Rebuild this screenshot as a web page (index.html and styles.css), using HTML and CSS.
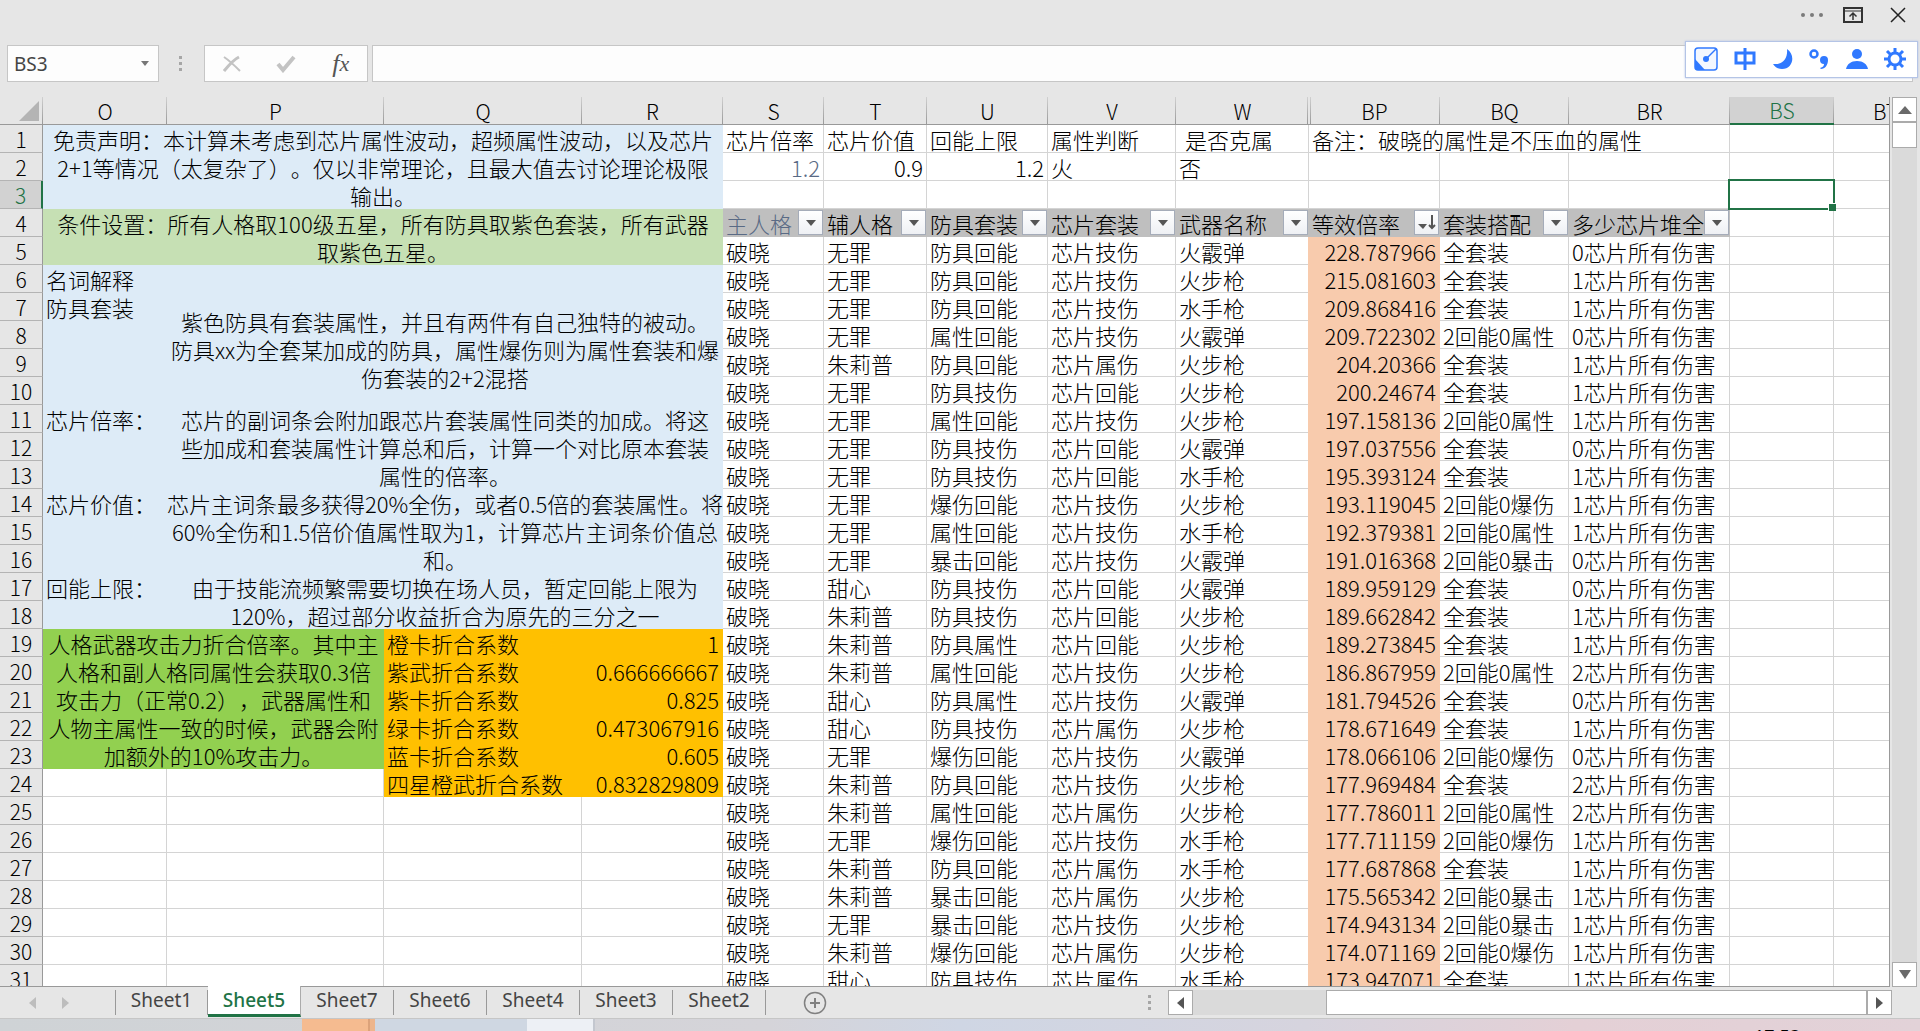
FILE: index.html
```html
<!DOCTYPE html>
<html lang="zh-CN">
<head>
    <meta charset="UTF-8">
    <meta name="viewport" content="width=device-width, initial-scale=1.0">
    <title>Sheet5</title>
    <link rel="stylesheet" href="styles.css">
</head>
<body>
    <header class="titlebar">
        <button class="icon-btn" aria-label="更多"><svg width="24" height="20" viewBox="0 0 24 20"><g fill="#7b7b7b"><circle cx="3" cy="10" r="2"/><circle cx="12" cy="10" r="2"/><circle cx="21" cy="10" r="2"/></g></svg></button>
        <button class="icon-btn" aria-label="功能区显示选项"><svg width="20" height="16" viewBox="0 0 20 16" fill="none" stroke="#333" stroke-width="2"><path d="M1 1h18v14H1z"/><path d="M1 4h18" stroke-width="1"/><path d="M10 13V6M6.500 9.500 10 6l3.500 3.500" stroke-width="1.500"/></svg></button>
        <button class="icon-btn" aria-label="关闭"><svg width="16" height="16" viewBox="0 0 16 16" fill="none" stroke="#222" stroke-width="1.500"><path d="M1 1l14 14M15 1 1 15"/></svg></button>
    </header>

    <div class="formula-row">
        <div class="name-box">
            <input type="text" value="BS3" aria-label="名称框">
            <button aria-label="名称列表"><svg width="8" height="5"><path d="M0 0h8L4 5z" fill="#777"/></svg></button>
        </div>
        <svg class="grip" width="3" height="15" fill="#a6a6a6"><path d="M0 0h3v3H0zM0 6h3v3H0zM0 12h3v3H0z"/></svg>
        <div class="formula-tools">
            <button aria-label="取消"><svg width="18" height="18" viewBox="0 0 18 18" fill="none" stroke="#c3c3c3"><path d="M1 2c6 4 10 8 16 14" stroke-width="2"/><path d="M16 2C10 5 6 10 1 16" stroke-width="3"/></svg></button>
            <button aria-label="输入"><svg width="20" height="18" viewBox="0 0 20 18" fill="none" stroke="#c3c3c3" stroke-width="4"><path d="M2 9l5 6L18 2"/></svg></button>
            <button class="fx" aria-label="插入函数">f<small>x</small></button>
        </div>
        <input class="formula-input" type="text" aria-label="编辑栏">
    </div>

    <div class="ime-bar">
        <button aria-label="输入法"><svg width="24" height="24" viewBox="0 0 24 24"><rect x="1" y="1" width="22" height="22" rx="3" fill="#f3f7ff" stroke="#3079ff" stroke-width="1.500"/><path d="M1 12l10 11H3l-2-2z" fill="#3079ff"/><circle cx="12" cy="12" r="3" fill="#3079ff"/><path d="M12 12 22 2" stroke="#3079ff" stroke-width="1.500"/></svg></button>
        <button aria-label="中文"><svg width="22" height="22" viewBox="0 0 22 22" fill="none" stroke="#3079ff" stroke-width="3"><path d="M2 5h18v10H2zM11 0v22"/></svg></button>
        <button aria-label="夜间"><svg width="20" height="20" viewBox="0 0 20 20" fill="#3079ff"><path d="M14 0c9 6 6 20-5 20-4 0-7-2-9-5 10 1 15-6 14-15z"/></svg></button>
        <button aria-label="标点"><svg width="20" height="20" viewBox="0 0 20 20"><circle cx="5" cy="5" r="3.500" fill="none" stroke="#3079ff" stroke-width="2.500"/><path d="M11 19c3-1 4-2 4-4a4 4 0 1 1 4-4c0 5-3 9-7 9z" fill="#3079ff"/></svg></button>
        <button aria-label="账户"><svg width="22" height="20" viewBox="0 0 22 20" fill="#3079ff"><circle cx="11" cy="5" r="5"/><path d="M0 20c1-5 5-8 11-8s10 3 11 8z"/></svg></button>
        <button aria-label="设置"><svg width="22" height="22" viewBox="0 0 22 22" fill="none" stroke="#3079ff" stroke-width="3"><circle cx="11" cy="11" r="6"/><path d="M11 0v5M11 17v5M0 11h5M17 11h5M3 3l4 4M15 15l4 4M19 3l-4 4M7 15l-4 4"/></svg></button>
    </div>

    <main class="workspace">
        <div class="grid-pane">
            <table class="sheet">
                <colgroup>
                    <col class="c-head"><col class="c-o"><col class="c-p"><col class="c-q"><col class="c-r"><col class="c-s"><col class="c-t"><col class="c-u"><col class="c-v"><col class="c-w"><col class="c-bp"><col class="c-bq"><col class="c-br"><col class="c-bs"><col>
                </colgroup>
                <thead>
                    <tr><th class="corner"><svg width="20" height="20"><path d="M20 0v20H0z" fill="#b4b4b4"/></svg></th><th>O</th><th>P</th><th>Q</th><th>R</th><th>S</th><th>T</th><th>U</th><th>V</th><th class="before-hidden">W</th><th class="after-hidden">BP</th><th>BQ</th><th>BR</th><th class="active">BS</th><th>BT</th></tr>
                </thead>
                <tbody>
                    <tr><th>1</th><td class="blue note" colspan="4" rowspan="3">免责声明：本计算未考虑到芯片属性波动，超频属性波动，以及芯片<br>2+1等情况（太复杂了）。仅以非常理论，且最大值去讨论理论极限<br>输出。</td><td>芯片倍率</td><td>芯片价值</td><td>回能上限</td><td>属性判断</td><td class="indent">是否克属</td><td colspan="3">备注：破晓的属性是不压血的属性</td><td></td><td></td></tr>
                    <tr><th>2</th><td class="num muted">1.2</td><td class="num">0.9</td><td class="num">1.2</td><td>火</td><td>否</td><td></td><td></td><td></td><td></td><td></td></tr>
                    <tr><th class="active">3</th><td></td><td></td><td></td><td></td><td></td><td></td><td></td><td></td><td class="selected"></td><td></td></tr>
                    <tr class="filters"><th>4</th><td class="lime note" colspan="4" rowspan="2">条件设置：所有人格取100级五星，所有防具取紫色套装，所有武器<br>取紫色五星。</td>
                        <td class="filter muted"><div><span>主人格</span><button aria-label="筛选主人格"><svg width="10" height="6"><path d="M0 0h10L5 6z" fill="#555"/></svg></button></div></td>
                        <td class="filter"><div><span>辅人格</span><button aria-label="筛选辅人格"><svg width="10" height="6"><path d="M0 0h10L5 6z" fill="#555"/></svg></button></div></td>
                        <td class="filter"><div><span>防具套装</span><button aria-label="筛选防具套装"><svg width="10" height="6"><path d="M0 0h10L5 6z" fill="#555"/></svg></button></div></td>
                        <td class="filter"><div><span>芯片套装</span><button aria-label="筛选芯片套装"><svg width="10" height="6"><path d="M0 0h10L5 6z" fill="#555"/></svg></button></div></td>
                        <td class="filter"><div><span>武器名称</span><button aria-label="筛选武器名称"><svg width="10" height="6"><path d="M0 0h10L5 6z" fill="#555"/></svg></button></div></td>
                        <td class="filter"><div><span>等效倍率</span><button aria-label="排序等效倍率"><svg width="18" height="16"><path d="M0 9h9l-4 5z" fill="#555"/><path d="M14 0v12M11 10l3 3 3-3" fill="none" stroke="#555" stroke-width="2"/></svg></button></div></td>
                        <td class="filter"><div><span>套装搭配</span><button aria-label="筛选套装搭配"><svg width="10" height="6"><path d="M0 0h10L5 6z" fill="#555"/></svg></button></div></td>
                        <td class="filter"><div><span>多少芯片堆全</span><button aria-label="筛选多少芯片堆全"><svg width="10" height="6"><path d="M0 0h10L5 6z" fill="#555"/></svg></button></div></td>
                        <td></td><td></td></tr>
                    <tr><th>5</th><td>破晓</td><td>无罪</td><td>防具回能</td><td>芯片技伤</td><td>火霰弹</td><td class="num rate">228.787966</td><td>全套装</td><td>0芯片所有伤害</td><td></td><td></td></tr>
                    <tr><th>6</th><td class="blue">名词解释</td><td class="blue" colspan="3"></td><td>破晓</td><td>无罪</td><td>防具回能</td><td>芯片技伤</td><td>火步枪</td><td class="num rate">215.081603</td><td>全套装</td><td>1芯片所有伤害</td><td></td><td></td></tr>
                    <tr><th>7</th><td class="blue">防具套装</td><td class="blue note" colspan="3" rowspan="4">紫色防具有套装属性，并且有两件有自己独特的被动。<br>防具xx为全套某加成的防具，属性爆伤则为属性套装和爆<br>伤套装的2+2混搭</td><td>破晓</td><td>无罪</td><td>防具回能</td><td>芯片技伤</td><td>水手枪</td><td class="num rate">209.868416</td><td>全套装</td><td>1芯片所有伤害</td><td></td><td></td></tr>
                    <tr><th>8</th><td class="blue" rowspan="3"></td><td>破晓</td><td>无罪</td><td>属性回能</td><td>芯片技伤</td><td>火霰弹</td><td class="num rate">209.722302</td><td>2回能0属性</td><td>0芯片所有伤害</td><td></td><td></td></tr>
                    <tr><th>9</th><td>破晓</td><td>朱莉普</td><td>防具回能</td><td>芯片属伤</td><td>火步枪</td><td class="num rate">204.20366</td><td>全套装</td><td>1芯片所有伤害</td><td></td><td></td></tr>
                    <tr><th>10</th><td>破晓</td><td>无罪</td><td>防具技伤</td><td>芯片回能</td><td>火步枪</td><td class="num rate">200.24674</td><td>全套装</td><td>1芯片所有伤害</td><td></td><td></td></tr>
                    <tr><th>11</th><td class="blue">芯片倍率：</td><td class="blue note" colspan="3" rowspan="3">芯片的副词条会附加跟芯片套装属性同类的加成。将这<br>些加成和套装属性计算总和后，计算一个对比原本套装<br>属性的倍率。</td><td>破晓</td><td>无罪</td><td>属性回能</td><td>芯片技伤</td><td>火步枪</td><td class="num rate">197.158136</td><td>2回能0属性</td><td>1芯片所有伤害</td><td></td><td></td></tr>
                    <tr><th>12</th><td class="blue" rowspan="2"></td><td>破晓</td><td>无罪</td><td>防具技伤</td><td>芯片回能</td><td>火霰弹</td><td class="num rate">197.037556</td><td>全套装</td><td>0芯片所有伤害</td><td></td><td></td></tr>
                    <tr><th>13</th><td>破晓</td><td>无罪</td><td>防具技伤</td><td>芯片回能</td><td>水手枪</td><td class="num rate">195.393124</td><td>全套装</td><td>1芯片所有伤害</td><td></td><td></td></tr>
                    <tr><th>14</th><td class="blue">芯片价值：</td><td class="blue note" colspan="3" rowspan="3">芯片主词条最多获得20%全伤，或者0.5倍的套装属性。将<br>60%全伤和1.5倍价值属性取为1，计算芯片主词条价值总<br>和。</td><td>破晓</td><td>无罪</td><td>爆伤回能</td><td>芯片技伤</td><td>火步枪</td><td class="num rate">193.119045</td><td>2回能0爆伤</td><td>1芯片所有伤害</td><td></td><td></td></tr>
                    <tr><th>15</th><td class="blue" rowspan="2"></td><td>破晓</td><td>无罪</td><td>属性回能</td><td>芯片技伤</td><td>水手枪</td><td class="num rate">192.379381</td><td>2回能0属性</td><td>1芯片所有伤害</td><td></td><td></td></tr>
                    <tr><th>16</th><td>破晓</td><td>无罪</td><td>暴击回能</td><td>芯片技伤</td><td>火霰弹</td><td class="num rate">191.016368</td><td>2回能0暴击</td><td>0芯片所有伤害</td><td></td><td></td></tr>
                    <tr><th>17</th><td class="blue">回能上限：</td><td class="blue note" colspan="3" rowspan="2">由于技能流频繁需要切换在场人员，暂定回能上限为<br>120%，超过部分收益折合为原先的三分之一</td><td>破晓</td><td>甜心</td><td>防具技伤</td><td>芯片回能</td><td>火霰弹</td><td class="num rate">189.959129</td><td>全套装</td><td>0芯片所有伤害</td><td></td><td></td></tr>
                    <tr><th>18</th><td class="blue"></td><td>破晓</td><td>朱莉普</td><td>防具技伤</td><td>芯片回能</td><td>火步枪</td><td class="num rate">189.662842</td><td>全套装</td><td>1芯片所有伤害</td><td></td><td></td></tr>
                    <tr><th>19</th><td class="green note" colspan="2" rowspan="5">人格武器攻击力折合倍率。其中主<br>人格和副人格同属性会获取0.3倍<br>攻击力（正常0.2），武器属性和<br>人物主属性一致的时候，武器会附<br>加额外的10%攻击力。</td><td class="orange">橙卡折合系数</td><td class="orange num">1</td><td>破晓</td><td>朱莉普</td><td>防具属性</td><td>芯片回能</td><td>火步枪</td><td class="num rate">189.273845</td><td>全套装</td><td>1芯片所有伤害</td><td></td><td></td></tr>
                    <tr><th>20</th><td class="orange">紫武折合系数</td><td class="orange num">0.666666667</td><td>破晓</td><td>朱莉普</td><td>属性回能</td><td>芯片技伤</td><td>火步枪</td><td class="num rate">186.867959</td><td>2回能0属性</td><td>2芯片所有伤害</td><td></td><td></td></tr>
                    <tr><th>21</th><td class="orange">紫卡折合系数</td><td class="orange num">0.825</td><td>破晓</td><td>甜心</td><td>防具属性</td><td>芯片技伤</td><td>火霰弹</td><td class="num rate">181.794526</td><td>全套装</td><td>0芯片所有伤害</td><td></td><td></td></tr>
                    <tr><th>22</th><td class="orange">绿卡折合系数</td><td class="orange num">0.473067916</td><td>破晓</td><td>甜心</td><td>防具技伤</td><td>芯片属伤</td><td>火步枪</td><td class="num rate">178.671649</td><td>全套装</td><td>1芯片所有伤害</td><td></td><td></td></tr>
                    <tr><th>23</th><td class="orange">蓝卡折合系数</td><td class="orange num">0.605</td><td>破晓</td><td>无罪</td><td>爆伤回能</td><td>芯片技伤</td><td>火霰弹</td><td class="num rate">178.066106</td><td>2回能0爆伤</td><td>0芯片所有伤害</td><td></td><td></td></tr>
                    <tr><th>24</th><td></td><td></td><td class="orange">四星橙武折合系数</td><td class="orange num">0.832829809</td><td>破晓</td><td>朱莉普</td><td>防具回能</td><td>芯片技伤</td><td>火步枪</td><td class="num rate">177.969484</td><td>全套装</td><td>2芯片所有伤害</td><td></td><td></td></tr>
                    <tr><th>25</th><td></td><td></td><td></td><td></td><td>破晓</td><td>朱莉普</td><td>属性回能</td><td>芯片属伤</td><td>火步枪</td><td class="num rate">177.786011</td><td>2回能0属性</td><td>2芯片所有伤害</td><td></td><td></td></tr>
                    <tr><th>26</th><td></td><td></td><td></td><td></td><td>破晓</td><td>无罪</td><td>爆伤回能</td><td>芯片技伤</td><td>水手枪</td><td class="num rate">177.711159</td><td>2回能0爆伤</td><td>1芯片所有伤害</td><td></td><td></td></tr>
                    <tr><th>27</th><td></td><td></td><td></td><td></td><td>破晓</td><td>朱莉普</td><td>防具回能</td><td>芯片属伤</td><td>水手枪</td><td class="num rate">177.687868</td><td>全套装</td><td>1芯片所有伤害</td><td></td><td></td></tr>
                    <tr><th>28</th><td></td><td></td><td></td><td></td><td>破晓</td><td>朱莉普</td><td>暴击回能</td><td>芯片属伤</td><td>火步枪</td><td class="num rate">175.565342</td><td>2回能0暴击</td><td>1芯片所有伤害</td><td></td><td></td></tr>
                    <tr><th>29</th><td></td><td></td><td></td><td></td><td>破晓</td><td>无罪</td><td>暴击回能</td><td>芯片技伤</td><td>火步枪</td><td class="num rate">174.943134</td><td>2回能0暴击</td><td>1芯片所有伤害</td><td></td><td></td></tr>
                    <tr><th>30</th><td></td><td></td><td></td><td></td><td>破晓</td><td>朱莉普</td><td>爆伤回能</td><td>芯片属伤</td><td>火步枪</td><td class="num rate">174.071169</td><td>2回能0爆伤</td><td>1芯片所有伤害</td><td></td><td></td></tr>
                    <tr><th>31</th><td></td><td></td><td></td><td></td><td>破晓</td><td>甜心</td><td>防具技伤</td><td>芯片属伤</td><td>水手枪</td><td class="num rate">173.947071</td><td>全套装</td><td>1芯片所有伤害</td><td></td><td></td></tr>
                </tbody>
            </table>
        </div>
        <div class="vscroll">
            <button aria-label="向上滚动"><svg width="14" height="8"><path d="M0 8l7-8 7 8z" fill="#6a6a6a"/></svg></button>
            <div class="vthumb"></div>
            <button class="down" aria-label="向下滚动"><svg width="12" height="9"><path d="M0 0h12L6 9z" fill="#6a6a6a"/></svg></button>
        </div>
    </main>

    <footer class="sheetbar">
        <div class="tab-nav">
            <button aria-label="上一个工作表"><svg width="7" height="12"><path d="M7 0v12L0 6z" fill="#bdbdbd"/></svg></button>
            <button aria-label="下一个工作表"><svg width="7" height="12"><path d="M0 0v12l7-6z" fill="#bdbdbd"/></svg></button>
        </div>
        <nav class="tabs">
            <a href="#sheet1">Sheet1</a>
            <a href="#sheet5" class="current">Sheet5</a>
            <a href="#sheet7">Sheet7</a>
            <a href="#sheet6">Sheet6</a>
            <a href="#sheet4">Sheet4</a>
            <a href="#sheet3">Sheet3</a>
            <a href="#sheet2">Sheet2</a>
        </nav>
        <button class="add-sheet" aria-label="新工作表"><svg width="24" height="24" viewBox="0 0 24 24" fill="none" stroke="#808080"><circle cx="12" cy="12" r="10.500" stroke-width="1.500"/><path d="M12 7v10M7 12h10" stroke-width="2"/></svg></button>
        <svg class="grip bar-grip" width="3" height="15" fill="#a6a6a6"><path d="M0 0h3v3H0zM0 6h3v3H0zM0 12h3v3H0z"/></svg>
        <div class="hscroll">
            <button aria-label="向左滚动"><svg width="7" height="12"><path d="M7 0v12L0 6z" fill="#555"/></svg></button>
            <div class="hthumb"></div>
            <button aria-label="向右滚动"><svg width="7" height="12"><path d="M0 0v12l7-6z" fill="#555"/></svg></button>
        </div>
    </footer>

    <div class="taskbar">
        <span class="task task-orange"></span>
        <span class="task task-blue"></span>
        <span class="task task-light"></span>
        <time class="clock">17:53</time>
    </div>
</body>
</html>
```
FILE: styles.css
```css
* {
    margin: 0;
    padding: 0;
    box-sizing: border-box;
}

body {
    display: flex;
    flex-direction: column;
    height: 100vh;
    overflow: hidden;
    position: relative;
    background-color: #e6e6e6;
    color: #000;
    font-family: "Noto Sans CJK SC", sans-serif;
    font-size: 22px;
}

button {
    display: flex;
    align-items: center;
    justify-content: center;
    border: none;
    background: none;
    cursor: pointer;
}

/* Title bar */
.titlebar {
    display: flex;
    justify-content: flex-end;
    align-items: center;
    gap: 19px;
    height: 45px;
    padding: 0 14px 15px 0;
    flex: none;
}

.titlebar .icon-btn:last-child {
    margin-left: 8px;
}

/* Name box and formula bar */
.formula-row {
    display: flex;
    align-items: center;
    height: 37px;
    padding: 0 7px;
    flex: none;
}

.name-box,
.formula-tools,
.formula-input {
    height: 37px;
    border: 1px solid #c6c6c6;
    background-color: #fdfdfd;
}

.name-box {
    display: flex;
    width: 152px;
}

.name-box input {
    width: 124px;
    padding-left: 6px;
    border: none;
    background: none;
    color: #444;
    font: 19px "Noto Sans", sans-serif;
}

.name-box button {
    width: 26px;
}

.grip {
    margin: 0 22px 0 20px;
    flex: none;
}

.formula-tools {
    display: flex;
    align-items: center;
    justify-content: space-around;
    width: 164px;
    margin-right: 4px;
}

.fx {
    color: #555;
    font: italic 26px "Liberation Serif", serif;
}

.fx small {
    font-size: 22px;
}

.formula-input {
    flex: 1;
    font-size: 20px;
}

/* Floating input method bar */
.ime-bar {
    position: absolute;
    top: 41px;
    right: 2px;
    display: flex;
    align-items: center;
    justify-content: space-between;
    width: 233px;
    height: 37px;
    padding: 0 11px 2px 8px;
    border: 1px solid #b4c4e6;
    background-color: #fff;
    box-shadow: 0 0 2px #b4c4e6;
}

/* Grid */
.workspace {
    display: flex;
    flex: 1;
    min-height: 0;
    padding: 15px 3px 0 0;
}

.grid-pane {
    flex: 1;
    min-width: 0;
    overflow: hidden;
    border-right: 1px solid #999;
    border-bottom: 1px solid #999;
}

.sheet {
    width: calc(100% + 48px);
    table-layout: fixed;
    border-collapse: separate;
    border-spacing: 0;
    background-color: #fff;
    text-spacing-trim: space-all;
}

.c-head { width: 43px; }
.c-o { width: 124px; }
.c-p { width: 217px; }
.c-q { width: 198px; }
.c-r { width: 141px; }
.c-s { width: 101px; }
.c-t { width: 103px; }
.c-u { width: 121px; }
.c-v { width: 128px; }
.c-w { width: 133px; }
.c-bp { width: 131px; }
.c-bq { width: 129px; }
.c-br { width: 161px; }
.c-bs { width: 104px; }

.sheet th,
.sheet td {
    height: 28px;
    line-height: 26px;
    white-space: nowrap;
    font-weight: 300;
}

.sheet th {
    background-color: #e6e6e6;
    font-size: 21px;
    text-align: center;
}

.sheet thead th {
    border-bottom: 1px solid #999;
    background-image: linear-gradient(#d0d0d0, #999);
    background-position: right top;
    background-size: 1px 100%;
    background-repeat: no-repeat;
}

.sheet thead th.before-hidden {
    background-position: right 1px top;
}

.sheet thead th.after-hidden {
    background-image: linear-gradient(#d0d0d0, #999), linear-gradient(#d0d0d0, #999);
    background-position: right top, 1px top;
}

.sheet thead th.active {
    border-bottom: 2px solid #217346;
}

.sheet th.active {
    background-color: #d2d2d2;
    color: #217346;
}

.sheet .corner svg {
    display: block;
    margin-left: 19px;
}

.sheet tbody th {
    border-right: 1px solid #999;
    border-bottom: 1px solid #b4b4b4;
}

.sheet tbody th.active {
    border-right: 2px solid #217346;
}

.sheet td {
    padding: 0 3px;
    border-right: 1px solid #d4d4d4;
    border-bottom: 1px solid #d4d4d4;
}

.sheet td.num {
    text-align: right;
}

.sheet td.muted {
    color: #596a85;
}

.sheet td.indent {
    padding-left: 9px;
}

.sheet td.note {
    padding: 0;
    border: none;
    line-height: 28px;
    text-align: center;
}

.sheet td.blue {
    background-color: #ddebf7;
    border-color: #ddebf7;
}

.sheet td.lime {
    background-color: #c6e0b4;
}

.sheet td.green {
    background-color: #92d050;
}

.sheet td.orange {
    background-color: #ffc000;
    border-color: #ffc000;
}

.sheet td.rate {
    background-color: #f8cbad;
    border-color: #f8cbad;
    box-shadow: -1px 0 0 #f8cbad;
}

.sheet td.filter {
    padding-right: 0;
    background-color: #bfbfbf;
    border-color: #bfbfbf;
}

.filter div {
    display: flex;
    align-items: center;
}

.filter span {
    flex: 1;
    min-width: 0;
}

.filter button {
    width: 25px;
    height: 25px;
    flex: none;
    border: 1px solid #a5acb9;
    background: linear-gradient(#fff, #eef0f4);
}

.sheet td.selected {
    position: relative;
}

.selected::before {
    content: "";
    position: absolute;
    inset: -2px;
    border: 2px solid #217346;
}

.selected::after {
    content: "";
    position: absolute;
    right: -3px;
    bottom: -3px;
    width: 7px;
    height: 7px;
    border-top: 1px solid #fff;
    border-left: 1px solid #fff;
    background-color: #217346;
}

/* Scroll bars */
.vscroll {
    display: flex;
    flex-direction: column;
    width: 25px;
    margin-left: 2px;
    background-color: #dadada;
}

.vscroll button,
.vthumb,
.hscroll button,
.hthumb {
    flex: none;
    border: 1px solid #ababab;
    background-color: #fff;
}

.vscroll button {
    height: 25px;
}

.vthumb {
    height: 26px;
}

.vscroll .down {
    margin-top: auto;
}

/* Sheet tabs */
.sheetbar {
    display: flex;
    align-items: flex-start;
    height: 32px;
    padding-right: 28px;
    border-bottom: 1px solid #c6c6c6;
    flex: none;
}

.tab-nav {
    display: flex;
    align-items: center;
    gap: 26px;
    width: 115px;
    height: 31px;
    padding-left: 29px;
}

.tabs {
    display: flex;
    align-items: flex-start;
    padding-top: 3px;
    height: 30px;
}

.tabs a {
    width: 93px;
    height: 25px;
    border-right: 1px solid #999;
    color: #444;
    font: 19px/20px "Noto Sans", sans-serif;
    text-align: center;
    text-decoration: none;
}

.tabs a:first-child {
    border-left: 1px solid #999;
}

.tabs .current {
    height: 31px;
    margin-top: -4px;
    padding-top: 4px;
    border-right-color: #ababab;
    border-bottom: 3px solid #217346;
    background-color: #fff;
    color: #217346;
    font-weight: 500;
}

.add-sheet {
    margin: 4px auto 0 37px;
}

.bar-grip {
    margin: 8px 17px 0;
}

.hscroll {
    display: flex;
    width: 724px;
    height: 25px;
    margin-top: 3px;
    background-color: #dadada;
}

.hscroll button {
    width: 25px;
}

.hscroll .hthumb {
    flex: 1;
    margin-left: 133px;
}

/* Desktop taskbar */
.taskbar {
    display: flex;
    height: 12px;
    padding-left: 302px;
    overflow: hidden;
    background: linear-gradient(90deg, #cfd3d6, #d5d4d9 40%, #cfd6e4 50%, #d6d4de 68%, #e4d0d6 82%, #e2d2d8);
    flex: none;
}

.task-orange {
    width: 73px;
    background: linear-gradient(90deg, #f5bb90 66px, #dca27a 66px, #dca27a 68px, #edb58c 68px);
}

.task-blue {
    width: 152px;
    background-color: #cfd7e2;
}

.task-light {
    width: 68px;
    border-right: 2px solid #c3c7cf;
    background-color: #edf0f5;
}

.clock {
    margin: 7px 120px 0 auto;
    font: 18px/20px "Noto Sans", sans-serif;
}
```
